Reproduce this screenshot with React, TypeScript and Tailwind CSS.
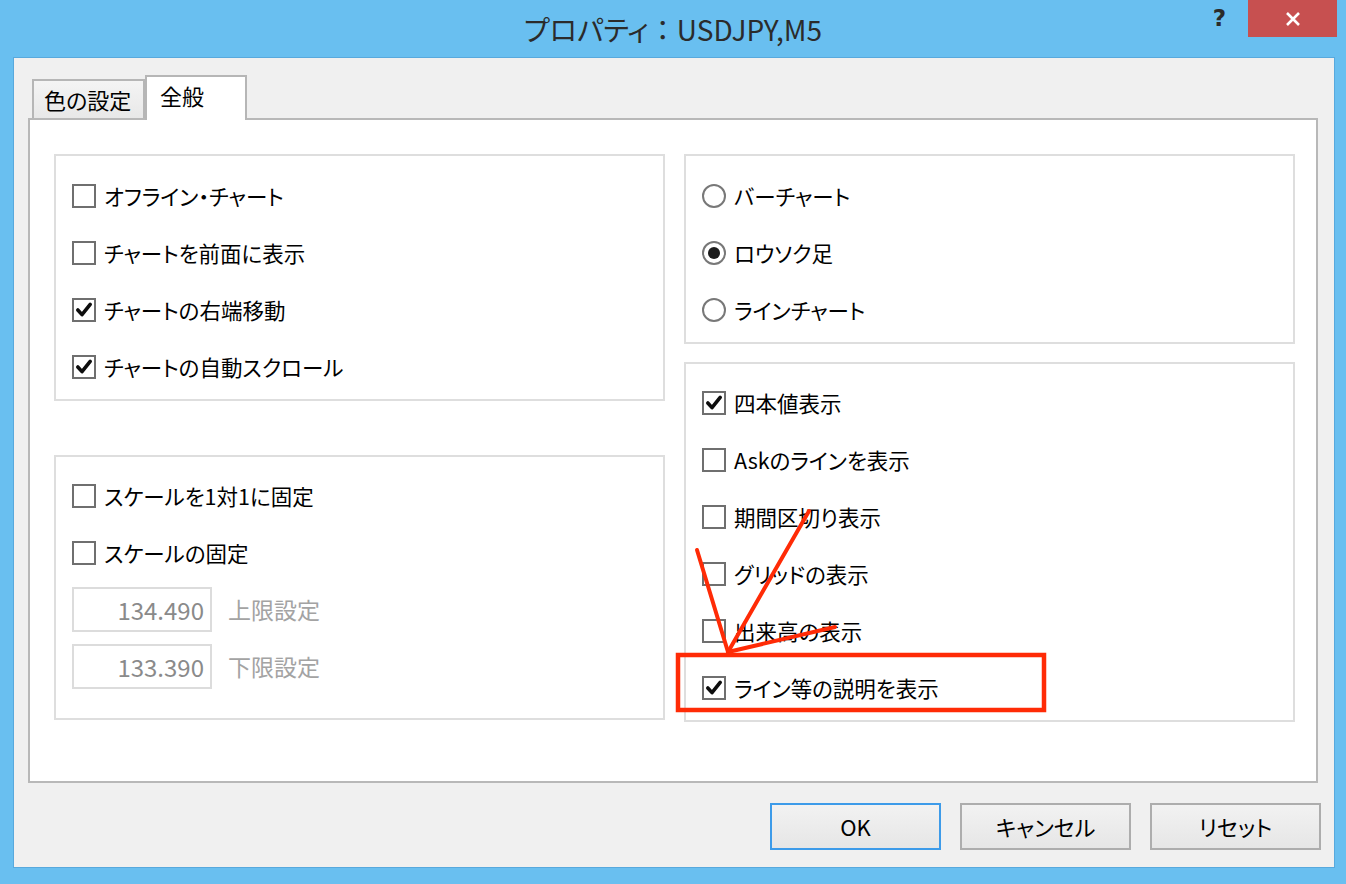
import React from 'react';

const FONT =
  "font-['Meiryo_UI','Noto_Sans_CJK_JP',sans-serif] [font-feature-settings:'palt']";

function CheckBox({checked}: {checked?: boolean}) {
  return (
    <span className="flex size-[24px] shrink-0 items-center justify-center border-2 border-[#6f6f6f] bg-white">
      {checked && (
        <svg width="18" height="18" viewBox="0 0 18 18" aria-hidden>
          <path
            d="M2.8 9 L7 13.6 L15.2 3.4"
            fill="none"
            stroke="#0d0d0d"
            strokeWidth="3.6"
            strokeLinecap="round"
            strokeLinejoin="round"
          />
        </svg>
      )}
    </span>
  );
}

function Radio({checked}: {checked?: boolean}) {
  return (
    <span className="flex size-[24px] shrink-0 items-center justify-center rounded-full border-2 border-[#787878] bg-white">
      {checked && <span className="size-[12px] rounded-full bg-[#1b1b1b]" />}
    </span>
  );
}

function Row({
  label,
  checked,
  radio
}: {
  label: string;
  checked?: boolean;
  radio?: boolean;
}) {
  return (
    <div className="flex h-[57px] items-center gap-[8px] pl-[16px]">
      {radio ? <Radio checked={checked} /> : <CheckBox checked={checked} />}
      <span className="text-[21.5px] leading-none text-[#000]">{label}</span>
    </div>
  );
}

function Group({className, children}: {className: string; children: React.ReactNode}) {
  return (
    <div className={`flex flex-col border-2 border-[#dedede] bg-white ${className}`}>
      {children}
    </div>
  );
}

function LimitField({value, label}: {value: string; label: string}) {
  return (
    <div className="flex h-[57px] items-center gap-[16px] pl-[16px]">
      <span className="flex h-[45px] w-[140px] items-center justify-end border-2 border-[#dcdcdc] pr-[6px] text-[24px] text-[#8a8a8a]">
        {value}
      </span>
      <span className="text-[23px] text-[#a3a3a3]">{label}</span>
    </div>
  );
}

function DialogButton({label, primary}: {label: string; primary?: boolean}) {
  return (
    <button
      className={`flex h-[47px] w-[171px] items-center justify-center border-2 bg-gradient-to-b from-[#f2f2f2] to-[#e6e6e6] text-[22px] text-[#000] ${
        primary ? 'border-[#3d9be9]' : 'border-[#adadad]'
      }`}
    >
      {label}
    </button>
  );
}

export default function App() {
  return (
    <div className={`relative flex h-[884px] w-[1346px] flex-col overflow-hidden bg-[#69bff0] ${FONT}`}>
      {/* title bar */}
      <header className="grid h-[57px] grid-cols-[1fr_auto_1fr]">
        <div />
        <div className="pt-[9px] text-[28px] leading-[40px] text-[#2b2b2b]">
          プロパティ<span className="[font-feature-settings:normal]">：</span>USDJPY,M5
        </div>
        <div className="flex items-start justify-end pr-[9px]">
          <span className="mr-[22px] mt-[2px] font-['DejaVu_Sans',sans-serif] text-[23px] font-bold leading-[32px] text-[#2a2a2a]">
            ?
          </span>
          <button className="flex h-[37px] w-[89px] items-center justify-center bg-[#c75050]">
            <svg width="16" height="16" viewBox="0 0 16 16" aria-hidden>
              <path d="M2 2 L14 14 M14 2 L2 14" stroke="#fff" strokeWidth="2.6" />
            </svg>
          </button>
        </div>
      </header>

      {/* client area */}
      <div className="ml-[13px] mr-[11px] flex h-[811px] flex-col border border-[#58a9dd] bg-[#f0f0f0]">
        <div className="ml-[18px] mt-[17px] flex h-[43px] items-end">
          <div className="flex h-[39px] w-[113px] items-center border-2 border-b-0 border-[#b6b6b6] bg-gradient-to-b from-[#f4f4f4] to-[#e8e8e8] pl-[10px] text-[22px] text-[#000]">
            色の設定
          </div>
          <div className="relative z-10 -mb-[2px] flex h-[45px] w-[102px] items-start border-2 border-b-0 border-[#b6b6b6] bg-white pl-[13px] pt-[2px] text-[22px] text-[#000]">
            全般
          </div>
        </div>

        <div className="ml-[14px] h-[665px] w-[1290px] border-2 border-[#b8b8b8] bg-white pl-[24px] pt-[34px]">
          <div className="grid grid-cols-[611px_611px] gap-x-[19px]">
            <div className="flex flex-col">
              <Group className="h-[247px] pt-[11px]">
                <Row label="オフライン・チャート" />
                <Row label="チャートを前面に表示" />
                <Row label="チャートの右端移動" checked />
                <Row label="チャートの自動スクロール" checked />
              </Group>
              <Group className="mt-[54px] h-[265px] pt-[10px]">
                <Row label="スケールを1対1に固定" />
                <Row label="スケールの固定" />
                <LimitField value="134.490" label="上限設定" />
                <LimitField value="133.390" label="下限設定" />
              </Group>
            </div>
            <div className="flex flex-col gap-[18px]">
              <Group className="h-[190px] pt-[11px]">
                <Row label="バーチャート" radio />
                <Row label="ロウソク足" radio checked />
                <Row label="ラインチャート" radio />
              </Group>
              <Group className="h-[360px] pt-[10px]">
                <Row label="四本値表示" checked />
                <Row label="Askのラインを表示" />
                <Row label="期間区切り表示" />
                <Row label="グリッドの表示" />
                <Row label="出来高の表示" />
                <Row label="ライン等の説明を表示" checked />
              </Group>
            </div>
          </div>
        </div>

        <div className="mt-[20px] flex justify-end gap-[19px] pr-[13px]">
          <DialogButton label="OK" primary />
          <DialogButton label="キャンセル" />
          <DialogButton label="リセット" />
        </div>
      </div>

      {/* red annotation drawn over the screenshot */}
      <svg
        className="pointer-events-none absolute left-0 top-0"
        width="1346"
        height="884"
        viewBox="0 0 1346 884"
        aria-hidden
      >
        <g stroke="#ff2b06" strokeWidth="4" strokeLinecap="round" fill="none">
          <path d="M697 550 L728 652" />
          <path d="M809 511 L728 652" />
          <path d="M835 627 L728 652" />
        </g>
        <rect x="678" y="655" width="366" height="55" fill="none" stroke="#ff2b06" strokeWidth="4.5" />
      </svg>
    </div>
  );
}
